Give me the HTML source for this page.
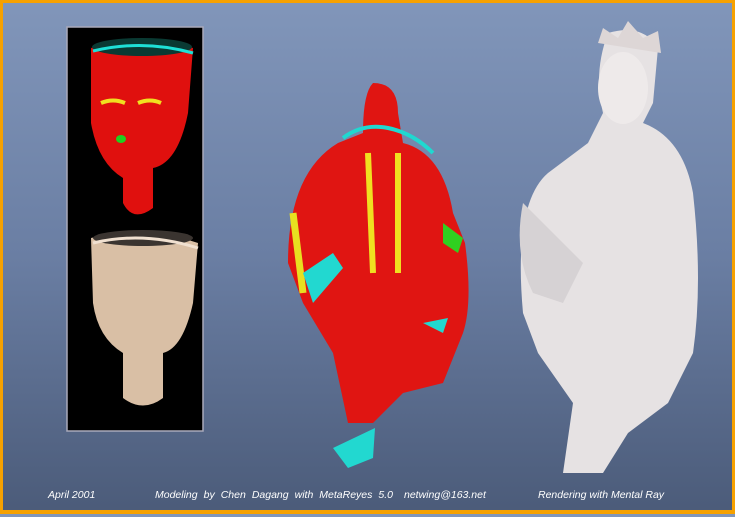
<!DOCTYPE html>
<html><head><meta charset="utf-8"><style>
html,body{margin:0;padding:0}
body{width:735px;height:514px;overflow:hidden;position:relative;box-sizing:border-box;border:3px solid #f6a100;border-bottom:4px solid #f6a100;background:linear-gradient(#8196ba 0%,#6a7ea3 50%,#4b5b79 100%)}
.t{position:absolute;top:486px;color:#fff;font:italic 10.5px "Liberation Sans",sans-serif;white-space:nowrap}
svg{position:absolute;left:0;top:0}
</style></head><body>
<svg width="735" height="514" viewBox="0 0 735 514">
<rect x="64" y="24" width="136" height="404" fill="#000" stroke="#aab" stroke-width="1.5"/>
<path d="M88 45 Q140 30 190 45 L185 110 Q175 160 150 165 L150 205 Q130 220 120 200 L120 175 Q95 160 88 120 Z" fill="#e0100e"/>
<ellipse cx="139" cy="44" rx="50" ry="9" fill="#0a3a33"/>
<path d="M90 48 Q140 36 190 50" stroke="#1ee0d6" stroke-width="3" fill="none"/>
<path d="M98 100 Q110 95 122 100 M135 100 Q147 95 158 100" stroke="#f0e020" stroke-width="4" fill="none"/>
<ellipse cx="118" cy="136" rx="5" ry="4" fill="#20d020"/>
<path d="M88 235 Q140 222 195 240 L190 300 Q180 345 160 350 L160 395 Q140 410 120 395 L120 350 Q95 335 90 300 Z" fill="#d9bfa5"/>
<ellipse cx="140" cy="235" rx="50" ry="8" fill="#3a3430"/>
<path d="M90 240 Q140 228 195 245" stroke="#f0e0d0" stroke-width="3" fill="none"/>
<path d="M370 80 Q395 80 395 110 L400 140 Q440 150 450 210 L462 240 Q470 300 460 330 L440 380 L400 390 L370 420 L345 420 L330 350 L300 300 L285 260 Q285 170 335 140 L360 130 Q360 90 370 80 Z" fill="#e01512"/>
<path d="M365 150 L370 270 M395 150 L395 270" stroke="#f0e020" stroke-width="6" fill="none"/>
<path d="M290 210 L300 290" stroke="#e8e020" stroke-width="7" fill="none"/>
<path d="M440 220 L460 235 L455 250 L440 240Z" fill="#30d020"/>
<path d="M340 135 Q360 120 385 125 Q410 130 430 150" stroke="#20d8d0" stroke-width="4" fill="none"/>
<path d="M300 270 L330 250 L340 265 L310 300Z M420 320 L445 315 L440 330Z M330 445 L345 465 L370 455 L372 425Z" fill="#22d8d0"/>
<path d="M605 30 Q640 20 655 45 L650 100 L640 120 Q680 135 690 190 Q700 280 690 350 L665 400 L625 430 L600 470 L560 470 L570 400 L535 350 L520 310 Q510 200 545 170 L585 140 L600 110 Q590 70 605 30 Z" fill="#e6e2e3"/>
<path d="M520 200 Q510 250 530 290 L560 300 L580 260" fill="#d6d2d4"/>
<ellipse cx="620" cy="85" rx="25" ry="36" fill="#eeeaea"/>
<path d="M595 40 L600 25 L615 35 L625 18 L640 35 L655 28 L658 50 Z" fill="#ddd6d6"/>
</svg>
<div class="t" style="left:45px">April 2001</div>
<div class="t" style="left:152px;width:238px;text-align:justify;text-align-last:justify">Modeling by Chen Dagang with MetaReyes 5.0</div>
<div class="t" style="left:401px">netwing@163.net</div>
<div class="t" style="left:535px">Rendering with Mental Ray</div>
</body></html>
